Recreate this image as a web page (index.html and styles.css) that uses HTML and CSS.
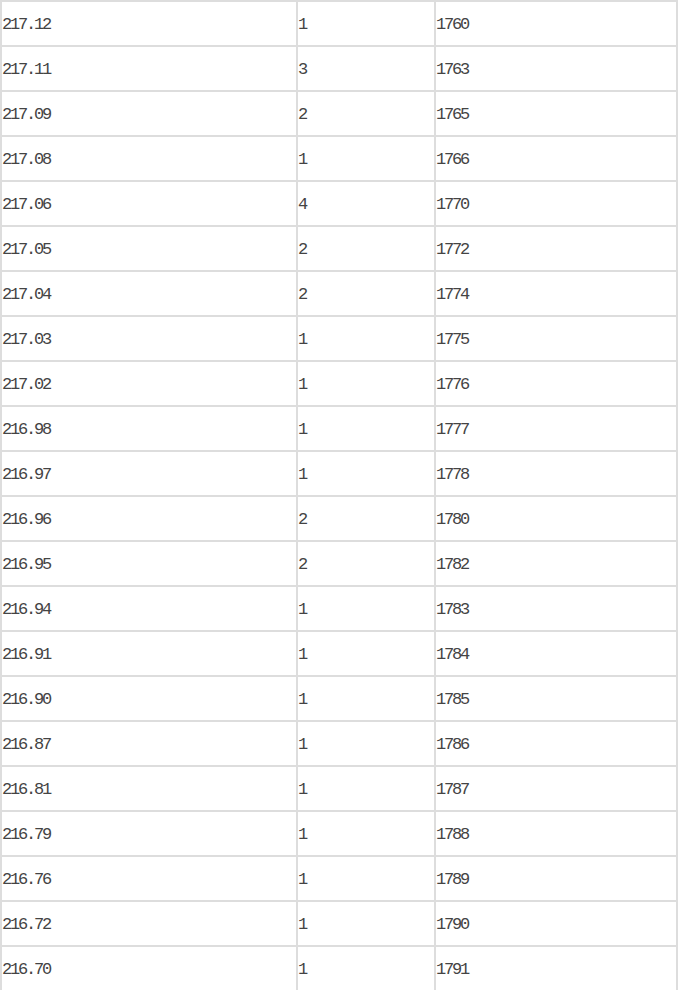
FILE: index.html
```html
<!DOCTYPE html>
<html>
<head>
<meta charset="utf-8">
<link rel="stylesheet" href="styles.css">
</head>
<body>
<table class="grid">
<colgroup><col class="c1"><col class="c2"><col class="c3"></colgroup>
<tbody>
<tr><td>217.12</td><td>1</td><td>1760</td></tr>
<tr><td>217.11</td><td>3</td><td>1763</td></tr>
<tr><td>217.09</td><td>2</td><td>1765</td></tr>
<tr><td>217.08</td><td>1</td><td>1766</td></tr>
<tr><td>217.06</td><td>4</td><td>1770</td></tr>
<tr><td>217.05</td><td>2</td><td>1772</td></tr>
<tr><td>217.04</td><td>2</td><td>1774</td></tr>
<tr><td>217.03</td><td>1</td><td>1775</td></tr>
<tr><td>217.02</td><td>1</td><td>1776</td></tr>
<tr><td>216.98</td><td>1</td><td>1777</td></tr>
<tr><td>216.97</td><td>1</td><td>1778</td></tr>
<tr><td>216.96</td><td>2</td><td>1780</td></tr>
<tr><td>216.95</td><td>2</td><td>1782</td></tr>
<tr><td>216.94</td><td>1</td><td>1783</td></tr>
<tr><td>216.91</td><td>1</td><td>1784</td></tr>
<tr><td>216.90</td><td>1</td><td>1785</td></tr>
<tr><td>216.87</td><td>1</td><td>1786</td></tr>
<tr><td>216.81</td><td>1</td><td>1787</td></tr>
<tr><td>216.79</td><td>1</td><td>1788</td></tr>
<tr><td>216.76</td><td>1</td><td>1789</td></tr>
<tr><td>216.72</td><td>1</td><td>1790</td></tr>
<tr><td>216.70</td><td>1</td><td>1791</td></tr>
</tbody>
</table>
</body>
</html>
```
FILE: styles.css
```css
html, body {
  margin: 0;
  padding: 0;
  background: #fff;
}
.grid {
  width: 678px;
  table-layout: fixed;
  border-collapse: separate;
  border-spacing: 0;
  border: 1px solid #dddddd;
  font-family: "Liberation Mono", "DejaVu Sans Mono", monospace;
  font-size: 17px;
  letter-spacing: -2.2px;
  color: #444444;
}
.c1 { width: 296px; }
.c2 { width: 138px; }
.c3 { width: 242px; }
.grid td {
  border: 1px solid #dddddd;
  height: 41px;
  padding: 2px 0 0 0;
  vertical-align: middle;
  line-height: 18px;
  box-sizing: content-box;
  white-space: nowrap;
}
```
